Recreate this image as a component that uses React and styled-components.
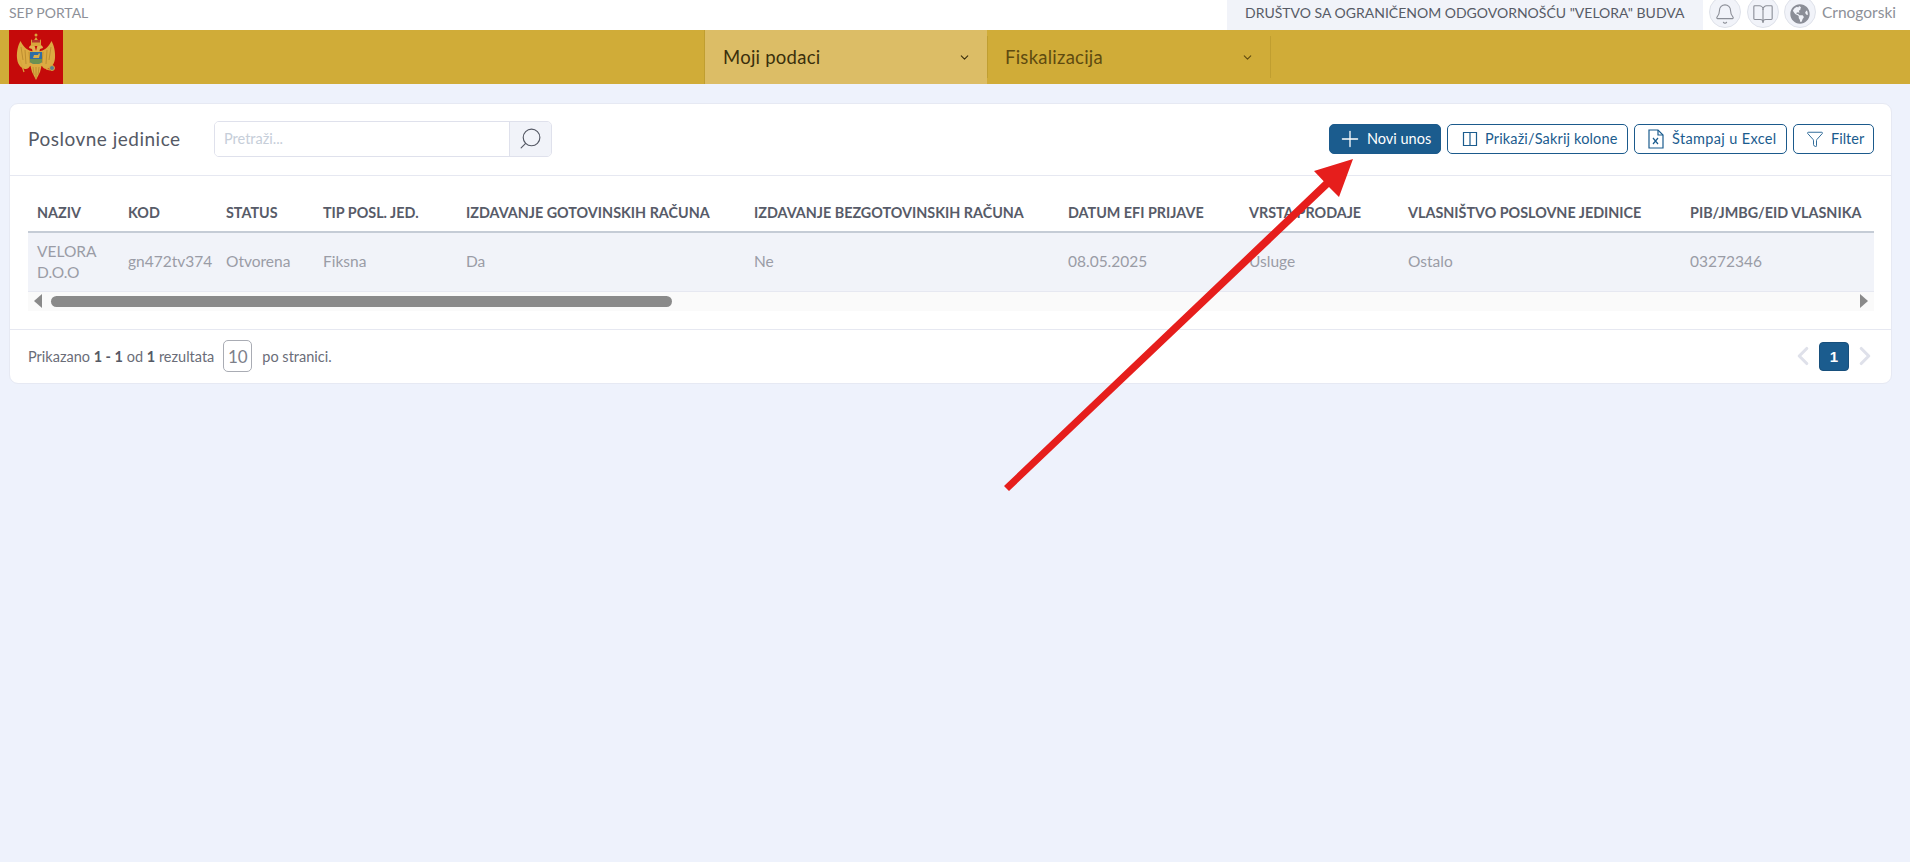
import React from 'react';
import styled, { createGlobalStyle } from 'styled-components';
import { Bell, BookOpen, Search, Plus, Funnel, ChevronDown, ChevronLeft, ChevronRight } from 'lucide-react';
import { FaGlobeAmericas } from 'react-icons/fa';

const GlobalStyle = createGlobalStyle`
  html, body {
    margin: 0;
    padding: 0;
    min-height: 100%;
    background: #eef2fc;
    font-family: 'Lato', 'Noto Sans', sans-serif;
  }

  *, *::after, *::before {
    box-sizing: border-box;
  }
`;

const Page = styled.div`
  position: relative;
  min-height: 862px;
  background: #eef2fc;
  overflow: hidden;
`;

const TopBar = styled.div`
  display: flex;
  align-items: flex-start;
  justify-content: space-between;
  height: 30px;
  background: #fff;
  overflow: hidden;
  padding: 0 14px 0 9px;
`;

const PortalName = styled.span`
  font-size: 14px;
  line-height: 25px;
  color: #8d9098;
`;

const TopRight = styled.div`
  display: flex;
  align-items: flex-start;
`;

const Company = styled.div`
  height: 30px;
  width: 476px;
  padding-left: 18px;
  background: #f1f3f9;
  color: #575b66;
  font-size: 14px;
  line-height: 25px;
  white-space: nowrap;
`;

const RoundIcon = styled.div`
  display: flex;
  align-items: center;
  justify-content: center;
  width: 32px;
  height: 32px;
  margin-top: -4px;
  margin-left: ${p => p.$gap}px;
  padding-top: 3px;
  border-radius: 50%;
  background: #f1f3f9;
  border: 1px solid #dfe2ea;
  color: #8b8e97;
`;

const Lang = styled.span`
  margin-left: 6px;
  font-size: 15.5px;
  line-height: 25px;
  color: #8d9098;
`;

const NavBar = styled.nav`
  display: flex;
  height: 54px;
  padding-left: 9px;
  background: #d0ac38;
`;

const Flag = styled.svg`
  display: block;
  width: 54px;
  height: 54px;
`;

const Tabs = styled.div`
  display: flex;
  margin-left: 641px;
  border-left: 1px solid #c09e30;
`;

const Tab = styled.div`
  display: flex;
  align-items: center;
  justify-content: space-between;
  width: ${p => p.$w}px;
  padding: 0 16px 0 18px;
  background: ${p => (p.$active ? '#dcbd66' : 'transparent')};
  color: ${p => (p.$active ? '#3a2f0c' : '#5f4b10')};
  font-size: 18.5px;
  letter-spacing: 0.25px;
  position: relative;

  &::after {
    content: '';
    position: absolute;
    right: -1px;
    top: 6px;
    bottom: 6px;
    width: 1px;
    background: #c09e30;
  }
`;

const Main = styled.main`
  padding: 19px 18px 0 9px;
`;

const Card = styled.section`
  background: #fff;
  border: 1px solid #e6e9f3;
  border-radius: 9px;
`;

const CardHeader = styled.header`
  display: flex;
  align-items: center;
  height: 72px;
  padding: 0 17px 2px 18px;
  border-bottom: 1px solid #e6e8f1;
`;

const Title = styled.h1`
  margin: 0;
  width: 186px;
  font-size: 19px;
  font-weight: 400;
  letter-spacing: 0.5px;
  color: #555965;
`;

const SearchBox = styled.div`
  display: flex;
  width: 338px;
  height: 36px;
  border: 1px solid #dfe1ec;
  border-radius: 5px;
  overflow: hidden;
`;

const SearchInput = styled.input`
  flex: 1;
  min-width: 0;
  border: 0;
  outline: 0;
  padding: 0 9px;
  font-family: inherit;
  font-size: 14.5px;
  color: #555965;

  &::placeholder {
    color: #c6ced9;
  }
`;

const SearchButton = styled.div`
  display: flex;
  align-items: center;
  justify-content: center;
  width: 42px;
  background: #f1f3f9;
  border-left: 1px solid #dfe1ec;
  color: #555965;
`;

const SearchGlyph = styled(Search)`
  transform: scaleX(-1);
`;

const Actions = styled.div`
  display: flex;
  gap: 6px;
  margin-left: auto;
`;

const ActionButton = styled.button`
  display: flex;
  align-items: center;
  gap: ${p => p.$gap}px;
  width: ${p => p.$w}px;
  height: 30px;
  padding: 0 0 0 ${p => p.$pad}px;
  border: 1px solid #1b5a8c;
  border-radius: 5px;
  background: ${p => (p.$primary ? '#1b5c8e' : '#fff')};
  color: ${p => (p.$primary ? '#fff' : '#1b5c8e')};
  font-family: inherit;
  font-size: 14.5px;
  letter-spacing: ${p => p.$track || 0}px;
  white-space: nowrap;
`;

const TableArea = styled.div`
  padding: 17px 17px 18px 18px;
  border-bottom: 1px solid #e6e8f1;
`;

const Table = styled.table`
  width: 100%;
  border-collapse: collapse;
  table-layout: fixed;
`;

const HeadCell = styled.th`
  width: ${p => p.$w}px;
  height: 39px;
  padding: 0 0 0 9px;
  border-bottom: 2px solid #c5ccd6;
  text-align: left;
  font-size: 14.35px;
  font-weight: 700;
  color: #575b68;
  white-space: nowrap;
`;

const Row = styled.tr`
  background: #f1f3f9;
`;

const Cell = styled.td`
  height: 59px;
  padding: 0 0 0 9px;
  border-bottom: 1px solid #e6e8f1;
  font-size: 15.5px;
  line-height: 21px;
  color: #9a9ca6;
`;

const ScrollBar = styled.div`
  display: flex;
  align-items: center;
  height: 19px;
  padding: 0 6px;
  background: #fafafa;
`;

const ScrollArrow = styled.span`
  width: 0;
  height: 0;
  border-top: 7px solid transparent;
  border-bottom: 7px solid transparent;
  ${p => (p.$right ? 'border-left: 8px solid #8a8a8a; margin-left: auto;' : 'border-right: 8px solid #8a8a8a;')}
`;

const ScrollThumb = styled.span`
  width: 621px;
  height: 11px;
  margin-left: 9px;
  border-radius: 6px;
  background: #8a8a8a;
`;

const Footer = styled.footer`
  display: flex;
  align-items: center;
  height: 53px;
  padding: 0 17px 0 18px;
  font-size: 14.5px;
  color: #6a6d78;

  b {
    font-weight: 700;
    color: #555965;
  }
`;

const PageSize = styled.span`
  display: flex;
  align-items: center;
  justify-content: center;
  width: 29px;
  height: 32px;
  margin: 0 10px 0 9px;
  border: 1px solid #a9acb4;
  border-radius: 5px;
  font-size: 17px;
  color: #7d808a;
`;

const Pager = styled.div`
  display: flex;
  align-items: center;
  gap: 10px;
  margin: 0 3px 0 auto;
  color: #dfe1ea;

  svg {
    margin: 0 -9px;
  }
`;

const PageButton = styled.span`
  display: flex;
  align-items: center;
  justify-content: center;
  width: 30px;
  height: 29px;
  border: 1px solid #174f7c;
  border-radius: 4px;
  background: #1b5c8e;
  color: #fff;
  font-family: 'Liberation Sans', sans-serif;
  font-size: 15px;
  font-weight: 700;
`;

// the red annotation sits over the whole page, in page coordinates
const Annotation = styled.svg`
  position: absolute;
  top: 0;
  left: 0;
  width: 1910px;
  height: 862px;
  pointer-events: none;
`;

const Coat = () => (
  <Flag viewBox="0 0 54 54">
    <rect width="54" height="54" fill="#c50a0a" />
    <path d="M26 21C20 22 15 18 11.500 11 9 15 7.500 22 8 28c.3 5 3 10 8 11 2 .5 4-1 5-3l5-1z" fill="#dcab42" />
    <path d="M28 21c6 1 11-3 14.500-10 2.500 4 4 11 3.500 17-.3 5-3 10-8 11-2 .5-4-1-5-3l-5-1z" fill="#dcab42" />
    <path d="M12 17l2 13M16 20l1 14M20 22l1 11M42 17l-2 13M38 20l-1 14M34 22l-1 11" stroke="#b5862c" strokeWidth=".8" fill="none" />
    <path d="M20 18c0-3 5-5 6-1l1 4 1-4c1-4 6-2 6 1l-3 1-1 4h-6l-1-4z" fill="#e0b350" />
    <path d="M22 9l2 3 3-5 3 5 2-3v7h-10z" fill="#d9a53b" />
    <circle cx="27" cy="5" r="1.500" fill="#d9a53b" />
    <rect x="23" y="10" width="8" height="2.500" fill="#b5362a" />
    <path d="M21 34h12l-2 8-4 8-4-8z" fill="#dcab42" />
    <path d="M24 37l1 8M27 37v11M30 37l-1 8" stroke="#b5862c" strokeWidth=".8" />
    <path d="M21 22h12v9c0 2-3 3-6 3s-6-1-6-3z" fill="#2f6da5" />
    <path d="M21 29h12v2c0 2-3 3-6 3s-6-1-6-3z" fill="#6c9150" />
    <path d="M24 28l1-3h4l1-2 1 1-1 4z" fill="#dcae48" />
    <path d="M11 30l4 12" stroke="#d9a53b" strokeWidth="1.200" />
    <circle cx="43" cy="38" r="2.500" fill="#5a7f8e" stroke="#d9a53b" />
    <path d="M37 39l4 1" stroke="#d9a53b" strokeWidth="1.200" />
  </Flag>
);

const ColumnsIcon = () => (
  <svg width="16" height="16" viewBox="0 0 16 16" fill="none" stroke="currentColor" strokeWidth="1.200">
    <path d="M1.500 1.500h13v13h-13zM8 1.500v13" />
  </svg>
);

const ExcelIcon = () => (
  <svg width="16" height="20" viewBox="0 0 16 20" fill="none" stroke="currentColor" strokeWidth="1.200">
    <path d="M1 1h9l5 5v13H1z" />
    <path d="M10 1v5h5" />
    <path d="M5 9l5 6M10 9l-5 6" />
  </svg>
);

const columns = [
  ['NAZIV', 91, 'VELORA D.O.O'],
  ['KOD', 98, 'gn472tv374'],
  ['STATUS', 97, 'Otvorena'],
  ['TIP POSL. JED.', 143, 'Fiksna'],
  ['IZDAVANJE GOTOVINSKIH RAČUNA', 288, 'Da'],
  ['IZDAVANJE BEZGOTOVINSKIH RAČUNA', 314, 'Ne'],
  ['DATUM EFI PRIJAVE', 181, '08.05.2025'],
  ['VRSTA PRODAJE', 159, 'Usluge'],
  ['VLASNIŠTVO POSLOVNE JEDINICE', 282, 'Ostalo'],
  ['PIB/JMBG/EID VLASNIKA', 193, '03272346'],
];

const App = () => (
  <>
    <GlobalStyle />
    <Page>
      <TopBar>
        <PortalName>SEP PORTAL</PortalName>
        <TopRight>
          <Company>DRUŠTVO SA OGRANIČENOM ODGOVORNOŠĆU "VELORA" BUDVA</Company>
          <RoundIcon $gap={6}><Bell size={22} strokeWidth={1.2} /></RoundIcon>
          <RoundIcon $gap={6}><BookOpen size={22} strokeWidth={1.2} /></RoundIcon>
          <RoundIcon $gap={5}><FaGlobeAmericas size={20} /></RoundIcon>
          <Lang>Crnogorski</Lang>
        </TopRight>
      </TopBar>

      <NavBar>
        <Coat />
        <Tabs>
          <Tab $active $w={282}>Moji podaci <ChevronDown size={13} /></Tab>
          <Tab $w={283}>Fiskalizacija <ChevronDown size={13} /></Tab>
        </Tabs>
      </NavBar>

      <Main>
        <Card>
          <CardHeader>
            <Title>Poslovne jedinice</Title>
            <SearchBox>
              <SearchInput placeholder="Pretraži..." />
              <SearchButton><SearchGlyph size={25} strokeWidth={1.1} /></SearchButton>
            </SearchBox>
            <Actions>
              <ActionButton $primary $w={112} $pad={7} $gap={4}><Plus size={26} strokeWidth={1.2} /> Novi unos</ActionButton>
              <ActionButton $w={181} $pad={14} $gap={7} $track={0.15}><ColumnsIcon /> Prikaži/Sakrij kolone</ActionButton>
              <ActionButton $w={153} $pad={13} $gap={8} $track={0.35}><ExcelIcon /> Štampaj u Excel</ActionButton>
              <ActionButton $w={81} $pad={12} $gap={7}><Funnel size={18} strokeWidth={1.2} /> Filter</ActionButton>
            </Actions>
          </CardHeader>

          <TableArea>
            <Table>
              <thead>
                <tr>
                  {columns.map(([title, width]) => (
                    <HeadCell key={title} $w={width}>{title}</HeadCell>
                  ))}
                </tr>
              </thead>
              <tbody>
                <Row>
                  {columns.map(([title, , value]) => (
                    <Cell key={title}>{value}</Cell>
                  ))}
                </Row>
              </tbody>
            </Table>
            <ScrollBar>
              <ScrollArrow />
              <ScrollThumb />
              <ScrollArrow $right />
            </ScrollBar>
          </TableArea>

          <Footer>
            <span>Prikazano <b>1 - 1</b> od <b>1</b> rezultata</span>
            <PageSize>10</PageSize>
            <span>po stranici.</span>
            <Pager>
              <ChevronLeft size={30} strokeWidth={2.5} />
              <PageButton>1</PageButton>
              <ChevronRight size={30} strokeWidth={2.5} />
            </Pager>
          </Footer>
        </Card>
      </Main>

      <Annotation viewBox="0 0 1910 862">
        <path d="M1353 159L1314 171 1323.700 181.300 1004 486 1009 491 1329 187 1339 197z" fill="#e61e1c" />
      </Annotation>
    </Page>
  </>
);

export default App;
